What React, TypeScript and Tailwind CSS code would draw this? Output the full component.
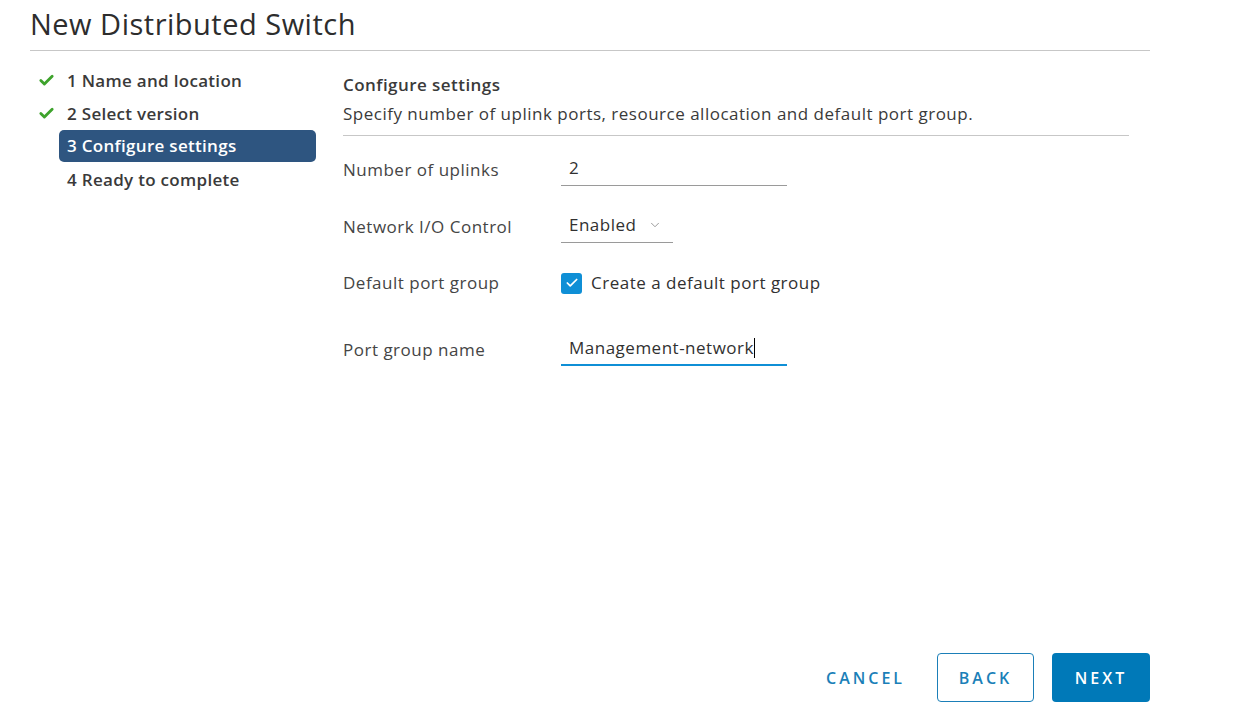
import { Check, ChevronDown } from "lucide-react";

const steps = [
  { n: "1 Name and location", done: true },
  { n: "2 Select version", done: true },
  { n: "3 Configure settings", active: true },
  { n: "4 Ready to complete" },
];

export default function App() {
  return (
    <div className="w-[1244px] h-[713px] bg-white text-[#313131] font-['Open_Sans',sans-serif] flex flex-col">
      <div className="px-[30px]">
        <h1 className="text-[29px] leading-[36px] pt-[6px] pb-[8px] text-[#2d2d2d] font-normal tracking-[0.5px]">
          New Distributed Switch
        </h1>
        <div className="h-px bg-[#c7c7c7] w-[1120px]" />
      </div>

      <div className="flex flex-1 pl-[38px] pt-[13px]">
        <nav className="w-[279px] flex flex-col">
          {steps.map((s) => (
            <div
              key={s.n}
              className={
                s.active
                  ? "h-[32px] ml-[21px] w-[257px] rounded-[5px] bg-[#2e5580] text-white font-semibold text-[17px] tracking-[0.3px] flex items-center pl-[8px] mb-[1px]"
                  : "h-[33px] flex items-center text-[17px] tracking-[0.3px] font-semibold text-[#3a3a3a]"
              }
            >
              {!s.active && (
                <span className="w-[29px] flex items-center">
                  {s.done && <Check className="w-[17px] h-[17px] text-[#3ea32c]" strokeWidth={4} />}
                </span>
              )}
              {s.n}
            </div>
          ))}
        </nav>

        <main className="ml-[26px] w-[786px] flex flex-col text-[17px] tracking-[0.5px]">
          <div className="font-semibold text-[#3a3a3a] leading-[22px] mt-[10px] tracking-[0.45px]">Configure settings</div>
          <div className="leading-[22px] mt-[7px] text-[#3a3a3a]">
            Specify number of uplink ports, resource allocation and default port group.
          </div>
          <div className="h-px bg-[#c7c7c7] mt-[10px]" />

          <div className="flex items-center mt-[19px] h-[30px]">
            <div className="w-[218px] text-[#454545]">Number of uplinks</div>
            <div className="w-[226px] h-[32px] border-b border-[#9a9a9a] flex items-center pb-[3px] pl-[8px]">2</div>
          </div>

          <div className="flex items-center mt-[27px] h-[30px]">
            <div className="w-[218px] text-[#454545]">Network I/O Control</div>
            <div className="w-[112px] h-[32px] border-b border-[#9a9a9a] flex items-center pb-[3px] pl-[8px] gap-[12px]">
              Enabled
              <ChevronDown className="w-[14px] h-[14px] text-[#8c8c8c]" strokeWidth={1.5} />
            </div>
          </div>

          <div className="flex items-center mt-[26px] h-[30px]">
            <div className="w-[218px] text-[#454545]">Default port group</div>
            <div className="flex items-center gap-[9px]">
              <span className="w-[21px] h-[21px] rounded-[3px] bg-[#0f8fd6] flex items-center justify-center">
                <Check className="w-[14px] h-[14px] text-white" strokeWidth={3} />
              </span>
              Create a default port group
            </div>
          </div>

          <div className="flex items-center mt-[37px] h-[30px]">
            <div className="w-[218px] text-[#454545]">Port group name</div>
            <div className="w-[226px] h-[32px] border-b-2 border-[#0f8fd6] flex items-center pb-[2px] pl-[8px]">
              Management-network<span className="w-px h-[20px] bg-black" />
            </div>
          </div>
        </main>
      </div>

      <div className="flex justify-end items-center pr-[94px] pb-[11px]">
        <button className="h-[49px] pr-[32px] text-[#1b7fb8] text-[16px] font-semibold tracking-[3px]">CANCEL</button>
        <button className="h-[49px] w-[97px] mr-[18px] rounded-[4px] border border-[#1b7fb8] text-[#1b7fb8] text-[16px] font-semibold tracking-[3px]">
          BACK
        </button>
        <button className="h-[49px] w-[98px] rounded-[4px] bg-[#0079b8] text-white text-[16px] font-semibold tracking-[3px]">
          NEXT
        </button>
      </div>
    </div>
  );
}
